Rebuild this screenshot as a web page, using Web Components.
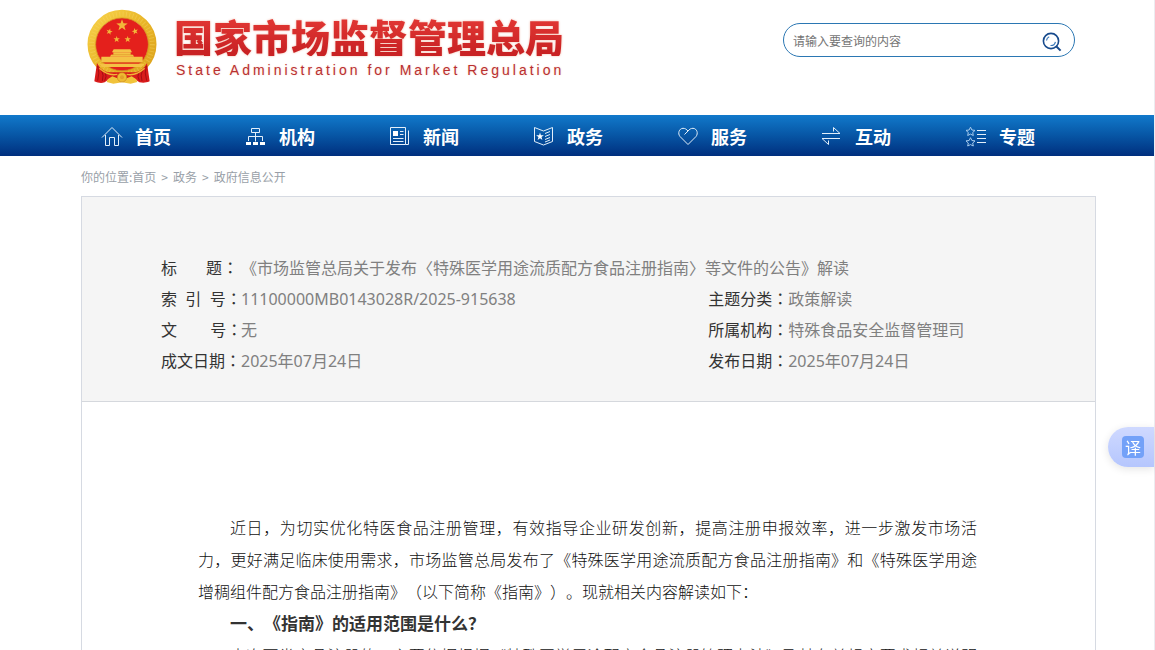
<!DOCTYPE html>
<html lang="zh-CN">
<head>
<meta charset="utf-8">
<meta name="viewport" content="width=device-width">
<title>国家市场监督管理总局</title>
<style>
html,body{height:100%;margin:0}
body{box-sizing:border-box;border-right:1px solid #ececf0;overflow:hidden;background:#fff;color:#333;
font-family:"Noto Sans","Noto Sans CJK SC",sans-serif}
</style>
</head>
<body>
<samr-page></samr-page>
<script>
const define=(name,html)=>customElements.define(name,class extends HTMLElement{
  constructor(){
    super();
    const t=document.createElement('template');
    t.innerHTML=html;
    this.attachShadow({mode:'open'}).append(t.content.cloneNode(true));
  }
});

define('samr-emblem',`
<style>:host{display:block;flex:none}svg{display:block}</style>
<svg width="70" height="76" viewBox="20 26 210 228" role="img" aria-label="国徽">
<defs>
<linearGradient id="g" x1="0" y1="0" x2="1" y2="1"><stop offset="0" stop-color="#f7d24a"/><stop offset=".5" stop-color="#e9b528"/><stop offset="1" stop-color="#dca21c"/></linearGradient>
<path id="s" d="M0-10 2.4-3.3 9.5-3.1 3.9 1.3 5.9 8.1 0 4.1-5.9 8.1-3.9 1.3-9.5-3.1-2.4-3.3z"/>
</defs>
<circle cx="125" cy="132" r="91" fill="none" stroke="url(#g)" stroke-width="25"/>
<circle cx="125" cy="132" r="91" fill="none" stroke="#f9de70" stroke-width="15" stroke-dasharray="3 7" opacity=".35"/>
<circle cx="125" cy="132" r="79" fill="#e4201c" stroke="#cf8d16" stroke-width="2"/>
<g fill="#f2b63a"><use href="#s" transform="translate(125 75) scale(1.8)"/><use href="#s" transform="translate(87 94) rotate(15)"/><use href="#s" transform="translate(164 93) rotate(-15)"/><use href="#s" transform="translate(109 117)"/><use href="#s" transform="translate(142 117)"/></g>
<g fill="#f4c245"><path d="M100 147h50l5 9H95z"/><path d="M99 156h52v7H99zM92 163h66l3 6H89z"/><path d="M63 169h124v17H63zM56 190h138l-10 10H66z"/></g>
<path d="M94 163h62M63 187h124" stroke="#d68c20" stroke-width="1.5"/>
<path d="M50 188c7 14 17 23 32 28l86 0c15-5 25-14 32-28l8 55c-12 5-20 5-31 3l-17-12-70 0-17 12c-10 3-19 2-31-3z" fill="#d91b1b"/>
<path d="M52 197q7 20 0 44M63 207q9 18 3 35M75 215q5 15-2 26M198 197q-7 20 1 44M187 207q-8 18-2 35M175 215q-5 15 2 26" stroke="#a50d13" stroke-width="3" fill="none"/>
<path d="M82 237l14-9 13 5 16 13-26 4-20-5zM168 237l-14-9-13 5-16 13 26 4 20-5z" fill="#f1c33b"/>
<circle cx="125" cy="231" r="14" fill="#eebb32" stroke="#c98416" stroke-width="2"/><circle cx="125" cy="231" r="6" fill="#e2a02a"/>
<path d="M57 204q27 24 54 18M193 204q-27 24-54 18" stroke="#f0b335" stroke-width="4" fill="none"/>
</svg>`);

define('site-logo',`
<style>
:host{display:flex;gap:17px;color:#b93030}
a{color:inherit;text-decoration:none}
.t{display:block;margin-top:7px}
h1{margin:0;font:900 39px/40px "Noto Sans CJK SC",sans-serif;white-space:nowrap;filter:drop-shadow(0 0 1px #f3b9a8)}
h1 span{display:block;color:transparent;background:linear-gradient(#df3532 15%,#c92224 90%);-webkit-background-clip:text;background-clip:text}
p{margin:4px 0 0;padding-left:2px;font:14px/20px "Liberation Sans",Arial,sans-serif;letter-spacing:3px;white-space:nowrap;text-shadow:0 0 2px #f6cfc2}
</style>
<samr-emblem></samr-emblem>
<a class="t" href="#"><h1><span>国家市场监督管理总局</span></h1><p>State Administration for Market Regulation</p></a>`);

define('search-box',`
<style>
:host{display:block;width:292px}
form{box-sizing:border-box;height:34px;display:flex;align-items:center;border:1px solid #2b77b3;border-radius:17px;padding:0 12px 0 9px}
input{flex:1;min-width:0;border:0;padding:0;outline:0;background:none;font:12px "Noto Sans CJK SC",sans-serif;color:#333}
input::placeholder{color:#757575;opacity:1}
button{border:0;background:none;padding:3px 0 0;height:24px}
svg{display:block}
</style>
<form><input type="search" aria-label="查询内容" placeholder="请输入要查询的内容"><button type="button" aria-label="查询">
<svg width="20" height="20" viewBox="0 0 20 20" fill="none" stroke="#174a8c" stroke-width="1.6"><circle cx="9" cy="9" r="7.6"/><path d="M14.2 14.2 18.6 18.6" stroke-width="2"/><path d="M4.5 8.5A4.5 4.5 0 0 1 7.2 4.8M8.5 13.5A4.7 4.7 0 0 0 13.4 9.8" stroke-width="1.2" stroke="#3979ba"/></svg></button></form>`);

define('nav-item',`
<style>
:host{display:block;width:144px}
a{display:flex;align-items:center;gap:12px;height:41px;color:#fff;text-decoration:none;font:bold 18px/41px "Noto Sans CJK SC",sans-serif;white-space:nowrap}
span{display:block;padding-top:2px}
::slotted(svg){display:block;width:22px;height:22px;margin-top:2px;fill:none;stroke:#e3effa;stroke-width:1}
</style><a href="#"><slot name="icon"></slot><span><slot></slot></span></a>`);

define('main-nav',`
<style>
:host{display:block;background:linear-gradient(#1179cb,#0757a6 48%,#002f7e)}
nav{display:flex;padding-left:101px;height:41px}
</style>
<nav aria-label="主导航">
<nav-item><svg slot="icon" viewBox="0 0 22 22"><path d="M1 11.500 11 1.500 21 11.500M4.500 9v10.500h4v-8h5v8h4V9"/></svg>首页</nav-item>
<nav-item><svg slot="icon" viewBox="0 0 22 22"><path d="M6.500 2.500h8v4h-8zM10.500 6.500v9M3.500 15v-4.500h14V15"/><path d="M1 16h5v3H1zM8 16h5v3H8zM15 16h5v3h-5z" fill="#fff" stroke="none"/></svg>机构</nav-item>
<nav-item><svg slot="icon" viewBox="0 0 22 22"><path d="M1.500 1.500h15v17h-15zM16.500 18.500h3v-14M11 5.500h3.500M11 8.500h3.500M4 12.500h10.500M4 15.500h10.500"/><path d="M4 5h5v5H4z" fill="#fff" stroke="none"/></svg>新闻</nav-item>
<nav-item><svg slot="icon" viewBox="0 0 22 22"><path d="M1.500 1.500 10.500 5l9-3.500v14L10.500 19l-9-3.500zM12 7.500l5-2M12 10.500l5-2M12 13.500l5-2M12 16l5-2"/><path d="M7 6.500 7.900 9.300h3l-2.400 1.700.9 2.900L7 12.200l-2.400 1.700.9-2.900-2.400-1.700h3z" fill="#fff" stroke="none"/></svg>政务</nav-item>
<nav-item><svg slot="icon" viewBox="0 0 22 22"><path d="M11 18.500 3 10.500C.5 7.500 2 2.500 6 2.300c2.200 0 3.500 1 5 2.700 1.500-1.700 2.800-2.700 5-2.700 4 .2 5.500 5.200 3 8.200zM11 5 7.500 8.500"/></svg>服务</nav-item>
<nav-item><svg slot="icon" viewBox="0 0 22 22"><path d="M1 7.500h18L12.500 1.500v4M19 12.500H1l6.500 6v-4"/></svg>互动</nav-item>
<nav-item><svg slot="icon" viewBox="0 0 22 22"><path d="M12 4.500h9M12 8.500h9M12 12.500h9M12 16.500h9"/><path d="M5.500 1.200 6.900 4l3.100.4-2.300 2.100.6 3-2.800-1.400-2.800 1.400.6-3L1 4.400 4.100 4zM5.500 11.700l1.400 2.800 3.100.4-2.300 2.100.6 3-2.800-1.400L2.700 20l.6-3L1 14.900l3.100-.4z" stroke="#a9cdef"/></svg>专题</nav-item>
</nav>`);

define('bread-crumb',`
<style>
:host{display:block;height:40px;font:12px/42px "Noto Sans CJK SC",sans-serif;color:#999fa8}
a{color:inherit;text-decoration:none}
nav{display:flex}
i{font-style:normal;padding:0 5px}
</style>
<nav aria-label="面包屑"><span>你的位置:</span><a href="#">首页</a><i>&gt;</i><a href="#">政务</a><i>&gt;</i><a href="#">政府信息公开</a></nav>`);

define('doc-meta',`
<style>
:host{display:block;background:#f5f5f5;border-bottom:1px solid #d5d8dd;padding:56px 79px 24px}
dl{display:grid;grid-template-columns:64% 36%;margin:0;font-size:16px;line-height:31px;white-space:nowrap}
div{display:flex;height:31px}
.wide{grid-column:1/-1}
dt{width:80px;color:#333}
i{font-style:normal;line-height:16px;font-family:"Noto Sans CJK TC",sans-serif}
dd{margin:0;color:#808080}
</style>
<dl>
<div class="wide"><dt>标&nbsp;&nbsp;&nbsp;&nbsp;&nbsp;&nbsp;&nbsp;题<i lang="zh-TW">：</i></dt><dd>《市场监管总局关于发布〈特殊医学用途流质配方食品注册指南〉等文件的公告》解读</dd></div>
<div><dt>索&nbsp;&nbsp;引&nbsp;&nbsp;号<i lang="zh-TW">：</i></dt><dd>11100000MB0143028R/2025-915638</dd></div>
<div><dt>主题分类<i lang="zh-TW">：</i></dt><dd>政策解读</dd></div>
<div><dt>文&nbsp;&nbsp;&nbsp;&nbsp;&nbsp;&nbsp;&nbsp;&nbsp;号<i lang="zh-TW">：</i></dt><dd>无</dd></div>
<div><dt>所属机构<i lang="zh-TW">：</i></dt><dd>特殊食品安全监督管理司</dd></div>
<div><dt>成文日期<i lang="zh-TW">：</i></dt><dd>2025年07月24日</dd></div>
<div><dt>发布日期<i lang="zh-TW">：</i></dt><dd>2025年07月24日</dd></div>
</dl>`);

define('doc-article',`
<style>
:host{display:block;padding:109px 118px 109px 116px;font:16px/32px "Noto Sans CJK SC",sans-serif;color:#333;text-spacing-trim:space-all}
p,h2{margin:0;text-indent:32px;text-align:justify}
p{font-weight:300;color:#111}
h2{font-size:17px;line-height:32px}
</style>
<p>近日，为切实优化特医食品注册管理，有效指导企业研发创新，提高注册申报效率，进一步激发市场活力，更好满足临床使用需求，市场监管总局发布了《特殊医学用途流质配方食品注册指南》和《特殊医学用途增稠组件配方食品注册指南》（以下简称《指南》）。现就相关内容解读如下：</p>
<h2>一、《指南》的适用范围是什么？</h2>
<p>本次两类产品注册的，主要依据根据《特殊医学用途配方食品注册管理办法》及其有关规定要求相关说明类产品的注册申请。</p>`);

define('translate-button',`
<style>
:host{position:fixed;right:1px;top:427px}
button{display:flex;align-items:center;box-sizing:border-box;width:46px;height:40px;border:0;border-radius:20px 0 0 20px;padding:0 0 0 14px;background:linear-gradient(#cfd9ff,#b5c6fd);box-shadow:0 2px 8px #0000001c}
span{width:22px;height:22px;border-radius:4px;background:#73a1f8;color:#fff;font:16px/22px "Noto Sans CJK SC",sans-serif;text-align:center}
</style><button type="button" aria-label="翻译"><span>译</span></button>`);

define('samr-page',`
<style>
:host{display:block}
header{display:flex;justify-content:space-between;box-sizing:border-box;height:115px;padding:9px 79px 0 87px}
search-box{margin-top:14px}
main{margin:0 58px 0 81px}
section{border:1px solid #d6dae2}
</style>
<header><site-logo></site-logo><search-box></search-box></header>
<main-nav></main-nav>
<main><bread-crumb></bread-crumb><section><doc-meta></doc-meta><doc-article></doc-article></section></main>
<translate-button></translate-button>`);
</script>
</body>
</html>
